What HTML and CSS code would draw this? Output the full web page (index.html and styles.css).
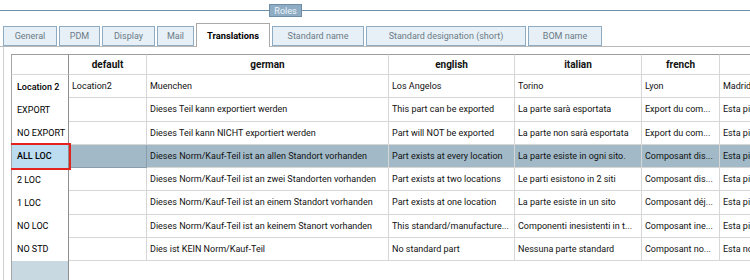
FILE: index.html
```html
<!DOCTYPE html>
<html lang="en">
<head>
<meta charset="utf-8">
<title>Roles - Translations</title>
<link rel="stylesheet" href="styles.css">
</head>
<body>
<div class="app">
  <div class="roles-bar">
    <span class="rule rule-left"></span>
    <span class="roles">Roles</span>
    <span class="rule rule-right"></span>
  </div>
  <div class="tabs">
    <div class="tab w-general">General</div>
    <div class="tab w-pdm">PDM</div>
    <div class="tab w-display">Display</div>
    <div class="tab w-mail">Mail</div>
    <div class="tab tab-active w-trans">Translations</div>
    <div class="tab w-stdname">Standard name</div>
    <div class="tab w-stddes">Standard designation (short)</div>
    <div class="tab w-bom">BOM name</div>
  </div>
  <div class="panel">
    <div class="grid">
      <table>
        <colgroup>
          <col class="c-rh">
          <col class="c-default">
          <col class="c-german">
          <col class="c-english">
          <col class="c-italian">
          <col class="c-french">
          <col class="c-spanish">
        </colgroup>
        <thead>
          <tr>
            <th class="corner"></th>
            <th>default</th>
            <th>german</th>
            <th>english</th>
            <th>italian</th>
            <th>french</th>
            <th>spanish</th>
          </tr>
        </thead>
        <tbody>
          <tr>
            <td class="rh rh-strong">Location 2</td>
            <td>Location2</td>
            <td>Muenchen</td>
            <td>Los Angelos</td>
            <td>Torino</td>
            <td>Lyon</td>
            <td>Madrid</td>
          </tr>
          <tr>
            <td class="rh">EXPORT</td>
            <td></td>
            <td>Dieses Teil kann exportiert werden</td>
            <td>This part can be exported</td>
            <td>La parte sarà esportata</td>
            <td>Export du com...</td>
            <td>Esta pieza puede ser exportada</td>
          </tr>
          <tr>
            <td class="rh">NO EXPORT</td>
            <td></td>
            <td>Dieses Teil kann NICHT exportiert werden</td>
            <td>Part will NOT be exported</td>
            <td>La parte non sarà esportata</td>
            <td>Export du com...</td>
            <td>Esta pieza NO puede ser exportada</td>
          </tr>
          <tr class="selected">
            <td class="rh rh-selected">ALL LOC</td>
            <td class="focus"></td>
            <td>Dieses Norm/Kauf-Teil ist an allen Standort vorhanden</td>
            <td>Part exists at every location</td>
            <td>La parte esiste in ogni sito.</td>
            <td>Composant dis...</td>
            <td>Esta pieza existe en todos los sitios</td>
          </tr>
          <tr>
            <td class="rh">2 LOC</td>
            <td></td>
            <td>Dieses Norm/Kauf-Teil ist an zwei Standorten vorhanden</td>
            <td>Part exists at two locations</td>
            <td>Le parti esistono in 2 siti</td>
            <td>Composant dis...</td>
            <td>Esta pieza existe en dos sitios</td>
          </tr>
          <tr>
            <td class="rh">1 LOC</td>
            <td></td>
            <td>Dieses Norm/Kauf-Teil ist an einem Standort vorhanden</td>
            <td>Part exists at one location</td>
            <td>La parte esiste in un sito</td>
            <td>Composant déj...</td>
            <td>Esta pieza existe en un sitio</td>
          </tr>
          <tr>
            <td class="rh">NO LOC</td>
            <td></td>
            <td>Dieses Norm/Kauf-Teil ist an keinem Stanort vorhanden</td>
            <td>This standard/manufacture...</td>
            <td>Componenti inesistenti in t...</td>
            <td>Composant ine...</td>
            <td>Esta pieza no existe</td>
          </tr>
          <tr>
            <td class="rh">NO STD</td>
            <td></td>
            <td>Dies ist KEIN Norm/Kauf-Teil</td>
            <td>No standard part</td>
            <td>Nessuna parte standard</td>
            <td>Composant no...</td>
            <td>Esta no es una pieza normalizada</td>
          </tr>
          <tr class="filler">
            <td class="rh-fill"></td>
            <td></td><td></td><td></td><td></td><td></td><td></td>
          </tr>
        </tbody>
      </table>
    </div>
  </div>
</div>
</body>
</html>
```

FILE: styles.css
```css
* { box-sizing: border-box; }

html, body {
  margin: 0;
  padding: 0;
  background: #ffffff;
}

body {
  width: 750px;
  height: 280px;
  overflow: hidden;
  font-family: Roboto, "Liberation Sans", Arial, sans-serif;
  font-size: 9px;
  color: #111111;
}

.app {
  width: 750px;
  height: 280px;
  display: flex;
  flex-direction: column;
}

/* Roles header bar */
.roles-bar {
  height: 21px;
  display: flex;
  align-items: center;
}
.rule {
  height: 1px;
  background: #6f8fa8;
}
.rule-left { width: 269px; }
.rule-right { flex: 1; }
.roles {
  width: 33px;
  height: 13px;
  background: #8eadc5;
  border: 1px solid #6d8ca5;
  color: #eef3f8;
  display: flex;
  align-items: center;
  justify-content: center;
  font-size: 9px;
}

/* Tabs */
.tabs {
  margin-top: 2px;
  height: 24px;
  border-bottom: 1px solid #b9b9b9;
  display: flex;
  align-items: flex-end;
  gap: 2px;
  padding-left: 3px;
}
.tab {
  height: 20px;
  background: #e6f0f6;
  border: 1px solid #8fabc1;
  color: #6c7a86;
  display: flex;
  align-items: center;
  justify-content: center;
  white-space: nowrap;
}
.tab-active {
  height: 24px;
  margin-bottom: -1px;
  background: #ffffff;
  border: 1px solid #a9a9a9;
  border-bottom: none;
  color: #000000;
  font-weight: bold;
  font-size: 9.3px;
  padding-bottom: 1px;
}
.w-general { width: 54px; }
.w-pdm { width: 41px; }
.w-display { width: 53px; }
.w-mail { width: 37px; }
.w-trans { width: 74px; }
.w-stdname { width: 92px; }
.w-stddes { width: 160px; }
.w-bom { width: 74px; }

/* Panel */
.panel {
  flex: 1;
  margin-left: 3px;
  border-left: 1px solid #cfcfcf;
  padding: 7px 0 0 7px;
  overflow: hidden;
}

.grid {
  height: 100%;
  overflow: hidden;
}

table {
  table-layout: fixed;
  width: 889px;
  border-collapse: separate;
  border-spacing: 0;
}

.c-rh { width: 58px; }
.c-default { width: 78px; }
.c-german { width: 242px; }
.c-english { width: 126px; }
.c-italian { width: 127px; }
.c-french { width: 78px; }
.c-spanish { width: 180px; }

th, td {
  white-space: nowrap;
  overflow: hidden;
  text-overflow: clip;
  text-align: left;
  vertical-align: middle;
  padding: 0 0 0 3px;
}

th {
  height: 21px;
  border-top: 1px solid #9d9d9d;
  border-right: 1px solid #d6d6d6;
  border-bottom: 1px solid #d6d6d6;
  text-align: center;
  font-weight: bold;
  font-size: 10px;
  color: #111111;
  padding: 0;
}
th.corner {
  border-left: 1px solid #a6a6a6;
  border-right: 1px solid #8f8f8f;
}

td {
  height: 23.25px;
  border-right: 1px solid #d6d6d6;
  border-bottom: 1px solid #d6d6d6;
}

td.rh {
  border-left: 1px solid #a6a6a6;
  border-right: 1px solid #8f8f8f;
  border-bottom: none;
  padding-left: 5px;
  color: #000000;
  background: #ffffff;
}
td.rh-strong { font-weight: 500; }

tr.selected td {
  background: #a2bac8;
}
tr.selected td.rh-selected {
  background: #bcdcf0;
  font-weight: 500;
  outline: 2px solid #e3231e;
  outline-offset: 0;
}
tr.selected td.focus {
  border-color: #8b9ea9;
}

tr.filler td {
  height: 30px;
  border: none;
  background: #ffffff;
}
tr.filler td.rh-fill {
  background: #c8d9e1;
  border-left: 1px solid #a6a6a6;
  border-right: 1px solid #8f8f8f;
}
```
